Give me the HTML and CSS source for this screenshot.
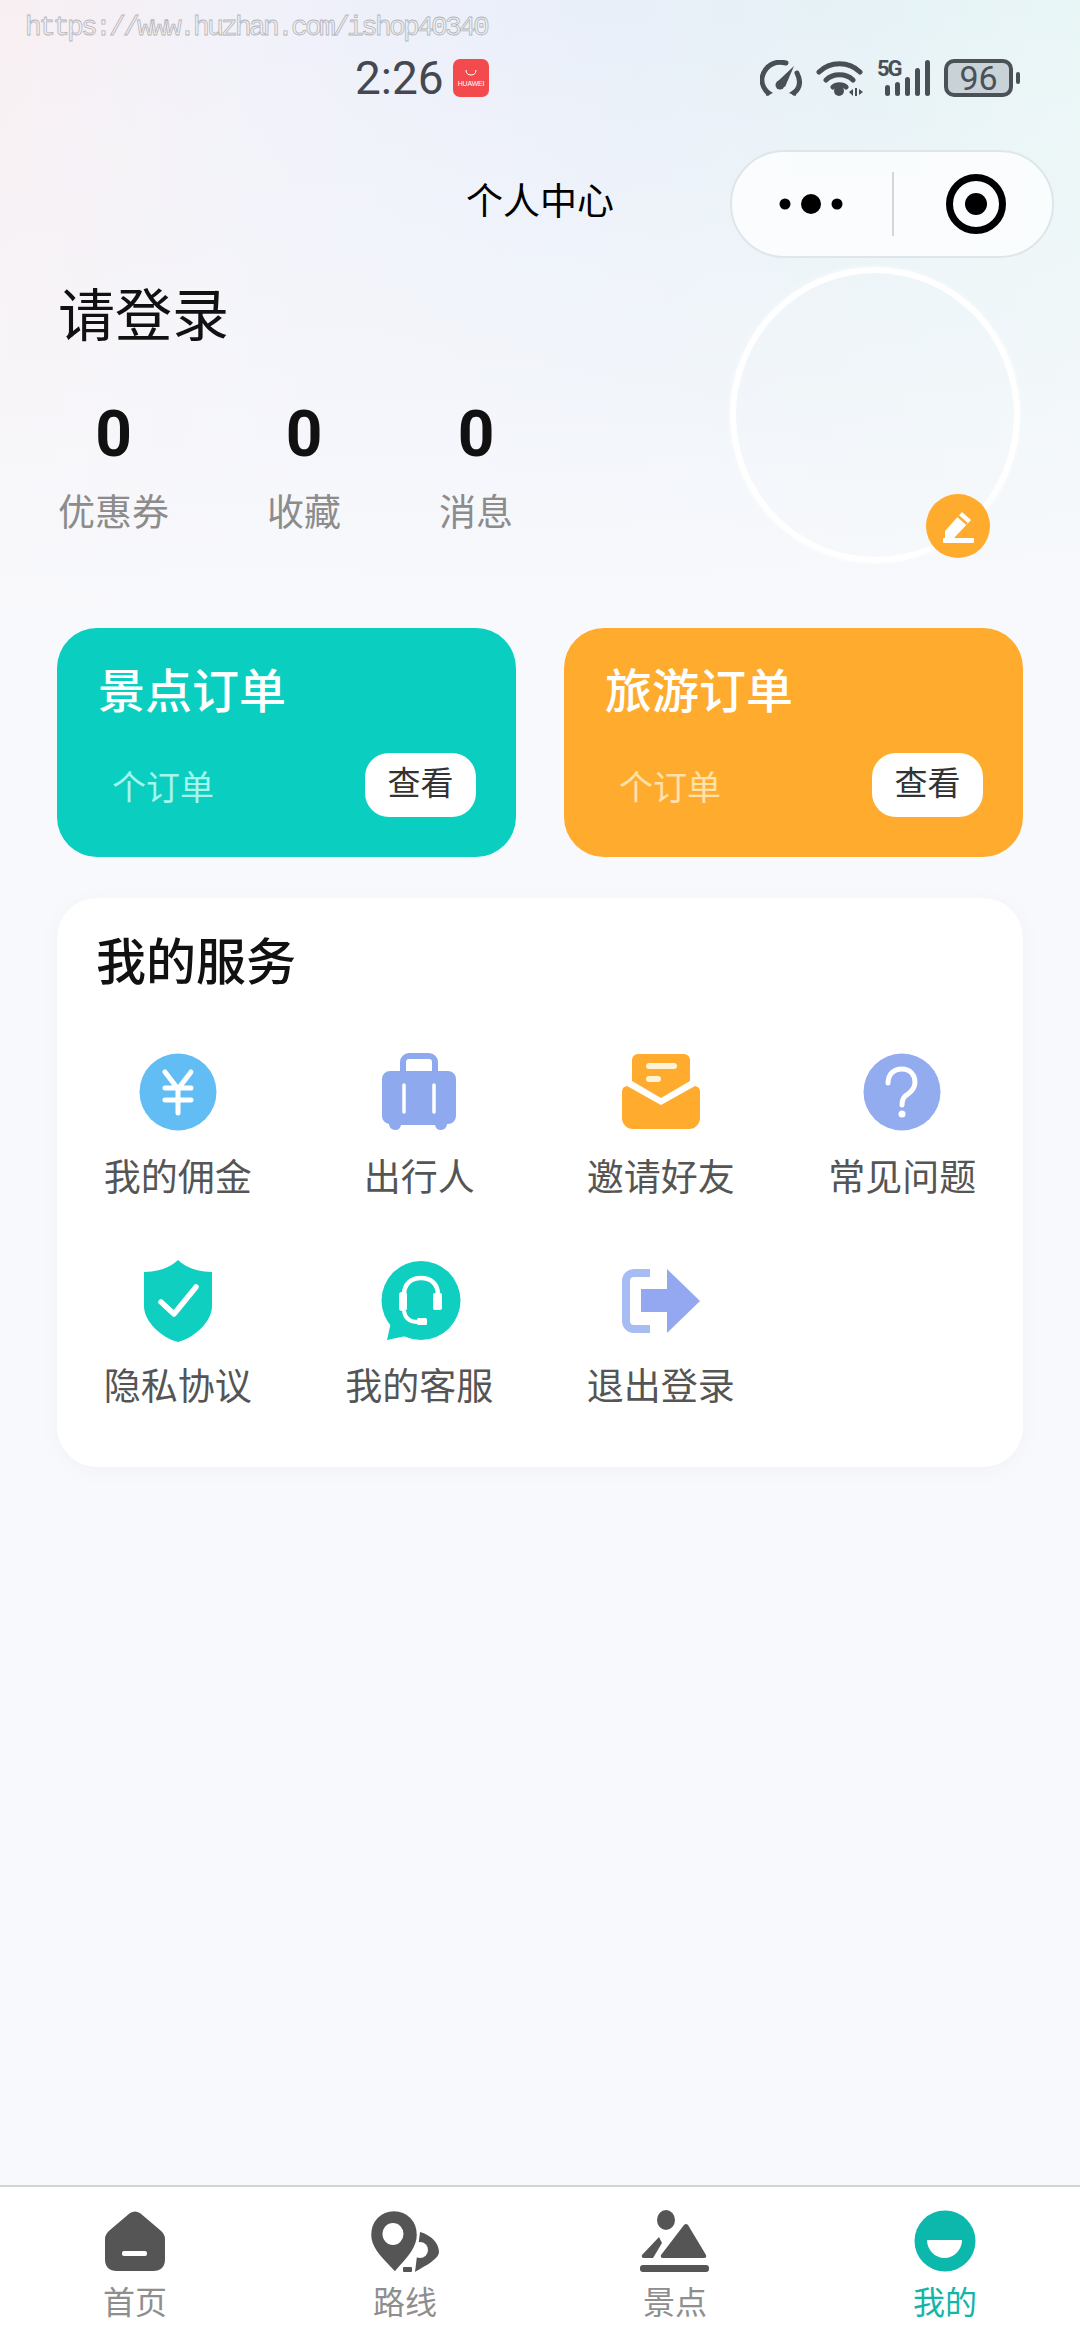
FILE: index.html
```html
<!DOCTYPE html>
<html lang="zh-CN">
<head>
<meta charset="utf-8">
<title>个人中心</title>
<link rel="stylesheet" href="styles.css">
</head>
<body>
<div class="page">
  <div class="watermark">https://www.huzhan.com/ishop40340</div>

  <div class="status">
    <div class="status-left">
      <span class="time">2:26</span>
      <span class="hw"><svg class="hw-smile" width="16" height="8" viewBox="0 0 16 8"><path d="M3 1c0 3.500 2 5 5 5s5-1.500 5-5" fill="none" stroke="#fff" stroke-width="1"/></svg><span class="hw-text">HUAWEI</span></span>
    </div>
    <div class="status-right">
      <svg width="42" height="36" viewBox="0 0 42 36"><path d="M8 33C1 26 0 17 6 9 11 3 18 1 26 3M37 13c4 8 3 15-3 20" fill="none" stroke="#4a4f56" stroke-width="5" stroke-linecap="round"/><path d="M17 22L34 6 25 27z" fill="#4a4f56"/><circle cx="20" cy="25" r="4.500" fill="#4a4f56"/><path d="M7 29l-1 7 7-3zM35 29l1 7-7-3z" fill="#4a4f56"/></svg>
      <svg width="47" height="38" viewBox="0 0 47 38"><path d="M3 13c11-11 30-11 41 0M10 21c7-7 20-7 27 0M17 28c3-3 10-3 13 0" fill="none" stroke="#4a4f56" stroke-width="5" stroke-linecap="round"/><circle cx="23" cy="32" r="5" fill="#4a4f56"/><path d="M33 33l4-3v7zM39 29h2v8h-2zM43 30l4 3-4 3z" fill="#4a4f56"/></svg>
      <svg class="signal" width="53" height="46" viewBox="0 -4 53 46"><text x="0" y="17" class="five-g">5G</text><rect x="8" y="26" width="5" height="11" rx="2.500" fill="#4a4f56"/><rect x="18" y="23" width="5" height="14" rx="2.500" fill="#4a4f56"/><rect x="28" y="18" width="5" height="19" rx="2.500" fill="#4a4f56"/><rect x="38" y="9" width="5" height="28" rx="2.500" fill="#4a4f56"/><rect x="48" y="1" width="5" height="36" rx="2.500" fill="#4a4f56"/></svg>
      <span class="battery"><span class="battery-body">96</span><span class="battery-tip"></span></span>
    </div>
  </div>

  <div class="nav">
    <span></span>
    <div class="nav-title">个人中心</div>
    <div class="capsule">
      <div class="capsule-part capsule-dots"><svg width="70" height="24" viewBox="0 0 70 24"><circle cx="8" cy="12" r="5.500" fill="#000"/><circle cx="34" cy="12" r="10" fill="#000"/><circle cx="60" cy="12" r="5.500" fill="#000"/></svg></div>
      <div class="capsule-line"></div>
      <div class="capsule-part capsule-target"><svg width="62" height="62" viewBox="0 0 62 62"><circle cx="31" cy="31" r="26.500" fill="none" stroke="#000" stroke-width="7"/><circle cx="31" cy="31" r="11" fill="#000"/></svg></div>
    </div>
  </div>

  <div class="profile">
    <div class="profile-left">
      <div class="login">请登录</div>
      <div class="stats">
        <div class="stat"><div class="stat-num">0</div><div class="stat-label">优惠券</div></div>
        <div class="stat"><div class="stat-num">0</div><div class="stat-label">收藏</div></div>
        <div class="stat"><div class="stat-num">0</div><div class="stat-label">消息</div></div>
      </div>
    </div>
    <div class="avatar">
      <div class="edit"><svg width="40" height="40" viewBox="0 0 40 40"><path d="M7 25L24 6l9 8-17 18H7z" fill="#fff"/><path d="M20 10l9 8" stroke="#ffab2e" stroke-width="2.500"/><rect x="5" y="32" width="31" height="5" rx="1" fill="#fff"/></svg></div>
    </div>
  </div>

  <div class="orders">
    <div class="order order-teal">
      <div class="order-title">景点订单</div>
      <div class="order-row"><span class="order-count">个订单</span><span class="order-btn">查看</span></div>
    </div>
    <div class="order order-orange">
      <div class="order-title">旅游订单</div>
      <div class="order-row"><span class="order-count">个订单</span><span class="order-btn">查看</span></div>
    </div>
  </div>

  <div class="service">
    <div class="service-title">我的服务</div>
    <div class="service-grid">
      <div class="service-item">
        <div class="service-icon"><svg width="78" height="78" viewBox="0 0 78 78"><circle cx="39" cy="39" r="38.500" fill="#63bdf5"/><path d="M26 19l13 17 13-17M39 36v24M26 35h26M26 47h26" fill="none" stroke="#fff" stroke-width="5" stroke-linecap="round" stroke-linejoin="round"/></svg></div>
        <div class="service-label">我的佣金</div>
      </div>
      <div class="service-item">
        <div class="service-icon"><svg width="76" height="78" viewBox="0 0 76 78"><path d="M22 20V9a6 6 0 0 1 6-6h20a6 6 0 0 1 6 6v11" fill="none" stroke="#8fa9ee" stroke-width="6"/><path d="M9 18h58a8 8 0 0 1 8 8v37a8 8 0 0 1-8 8h-1a6 6 0 0 1-6 6 6 6 0 0 1-6-5H20a6 6 0 0 1-6 5 6 6 0 0 1-6-6 8 8 0 0 1-7-8V26a8 8 0 0 1 8-8z" fill="#8fa9ee"/><path d="M23 32v27M53 32v27" stroke="#fff" stroke-width="3.500" stroke-linecap="round"/></svg></div>
        <div class="service-label">出行人</div>
      </div>
      <div class="service-item">
        <div class="service-icon"><svg width="78" height="76" viewBox="0 0 78 76"><path d="M16 0h46a6 6 0 0 1 6 6v21L39 44 10 27V6a6 6 0 0 1 6-6z" fill="#ffab2e"/><path d="M27 12h25" stroke="#fff3d6" stroke-width="6" stroke-linecap="round"/><path d="M27 25h9" stroke="#fff3d6" stroke-width="6" stroke-linecap="round"/><path d="M5 32l34 19 34-19a6 6 0 0 1 5 6v26a11 11 0 0 1-11 11H11A11 11 0 0 1 0 64V38a6 6 0 0 1 5-6z" fill="#ffab2e"/></svg></div>
        <div class="service-label">邀请好友</div>
      </div>
      <div class="service-item">
        <div class="service-icon"><svg width="78" height="78" viewBox="0 0 78 78"><circle cx="39" cy="39" r="38.500" fill="#93abef"/><path d="M25 30c0-9 6-14 14-14s13 6 13 13c0 6-3 9-7 12-4 2-6 5-6 11" fill="none" stroke="#fff" stroke-width="5" stroke-linecap="round"/><circle cx="39" cy="61" r="3.500" fill="#fff"/></svg></div>
        <div class="service-label">常见问题</div>
      </div>
      <div class="service-item">
        <div class="service-icon"><svg width="68" height="82" viewBox="0 0 68 82"><path d="M34 0c8 8 21 12 34 12v34c0 16-18 32-34 36C18 78 0 62 0 46V12c13 0 26-4 34-12z" fill="#0ecfc0"/><path d="M17 42l13 12 22-27" fill="none" stroke="#fff" stroke-width="5.500" stroke-linecap="round" stroke-linejoin="round"/></svg></div>
        <div class="service-label">隐私协议</div>
      </div>
      <div class="service-item">
        <div class="service-icon"><svg width="84" height="80" viewBox="-4 0 84 80"><circle cx="40" cy="39.500" r="39.500" fill="#0ecfc0"/><path d="M6 79l5-22 14 18z" fill="#0ecfc0"/><path d="M23 34c0-11 7-17 17-17s17 6 17 17" fill="none" stroke="#fff" stroke-width="4.500"/><rect x="18" y="31" width="8" height="19" rx="3" fill="#fff"/><rect x="52" y="32" width="9" height="17" rx="2" fill="#fff"/><path d="M23 50c1 7 6 11 14 11" fill="none" stroke="#fff" stroke-width="4"/><rect x="36" y="57" width="10" height="7" rx="1.500" fill="#fff"/></svg></div>
        <div class="service-label">我的客服</div>
      </div>
      <div class="service-item">
        <div class="service-icon"><svg width="78" height="64" viewBox="0 0 78 64"><path d="M28 4H12a8 8 0 0 0-8 8v40a8 8 0 0 0 8 8h16" fill="none" stroke="#a6bcf2" stroke-width="8"/><path d="M19 20h26V0l33 32-33 32V43H19z" fill="#93a8f0"/></svg></div>
        <div class="service-label">退出登录</div>
      </div>
    </div>
  </div>

  <div class="tabbar">
    <div class="tab">
      <svg width="60" height="62" viewBox="0 0 60 62"><path d="M25 3q5-3 10 0l20 17q5 4 5 9v20q0 12-12 12H12Q0 61 0 49V29q0-5 5-9z" fill="#555"/><rect x="17" y="41" width="25" height="5" rx="2" fill="#fff"/></svg>
      <div class="tab-label">首页</div>
    </div>
    <div class="tab">
      <svg width="70" height="62" viewBox="0 0 70 62"><path d="M50 22c11 3 19 11 19 20 0 7-14 14-24 20z" fill="#555"/><circle cx="50" cy="40" r="8" fill="#fff"/><path d="M24 0c14 0 24 11 24 25 0 15-14 27-22 37h-2C15 52 0 40 0 25 0 11 10 0 24 0z" fill="#555" stroke="#fff" stroke-width="2.500"/><ellipse cx="23" cy="24" rx="10.500" ry="11" fill="#fff"/><rect x="33" y="57" width="9" height="5" rx="1" fill="#555"/></svg>
      <div class="tab-label">路线</div>
    </div>
    <div class="tab">
      <svg width="70" height="62" viewBox="0 0 70 62"><ellipse cx="26" cy="10" rx="9" ry="10" fill="#555"/><path d="M44 15q2-2 4 0l18 30q1 3-2 3H23q-3 0-2-3z" fill="#555"/><path d="M19 27l3 6-9 15H4q-3 0-2-3z" fill="#555"/><rect x="0" y="55" width="69" height="7" rx="3" fill="#555"/></svg>
      <div class="tab-label">景点</div>
    </div>
    <div class="tab tab-active">
      <svg width="62" height="62" viewBox="0 0 62 62"><circle cx="31" cy="31" r="30.500" fill="#0bb8ab"/><path d="M13 30h35c0 10-8 18-17.500 18S13 40 13 30z" fill="#fff"/></svg>
      <div class="tab-label">我的</div>
    </div>
  </div>
</div>
</body>
</html>
```

FILE: styles.css
```css
* {
  box-sizing: border-box;
}

html,
body {
  margin: 0;
  padding: 0;
}

body {
  width: 1080px;
  height: 2340px;
  overflow: hidden;
  font-family: "Noto Sans CJK SC", "Noto Sans", sans-serif;
}

.page {
  position: relative;
  width: 1080px;
  height: 2340px;
  display: flex;
  flex-direction: column;
  background-color: #f8f9fc;
  background-image:
    linear-gradient(180deg, rgba(248, 249, 252, 0) 0, rgba(248, 249, 252, 0.4) 260px, #f8f9fc 620px),
    linear-gradient(90deg, #f8eff2 0, #f1f1f9 22%, #e9eff9 55%, #e6f2f6 80%, #e9f6f6 100%);
  background-size: 100% 640px, 100% 640px;
  background-repeat: no-repeat;
}

.watermark {
  position: absolute;
  left: 25px;
  top: 10px;
  font-family: "Liberation Mono", monospace;
  font-size: 28px;
  line-height: 36px;
  letter-spacing: -2.800px;
  color: transparent;
  -webkit-text-stroke: 0.8px #b5b5b8;
  white-space: nowrap;
}

/* status bar */
.status {
  height: 150px;
  padding: 59px 60px 0 355px;
  display: flex;
  justify-content: space-between;
  align-items: flex-start;
}

.status-left {
  display: flex;
  align-items: center;
  gap: 11px;
  height: 38px;
}

.time {
  font-family: Roboto, sans-serif;
  font-size: 46px;
  line-height: 38px;
  color: #454850;
  width: 87px;
}

.hw {
  width: 36px;
  height: 38px;
  border-radius: 7px;
  background: #f34a4d;
  display: flex;
  flex-direction: column;
  align-items: center;
  justify-content: center;
  gap: 3px;
}

.hw-smile {
  display: block;
}

.hw-text {
  font-family: "Liberation Sans", sans-serif;
  font-size: 7px;
  line-height: 8px;
  color: #fff;
  letter-spacing: -0.200px;
}

.status-right {
  display: flex;
  align-items: center;
  gap: 14px;
  height: 38px;
}

.five-g {
  font-family: "Roboto", sans-serif;
  font-weight: 700;
  font-size: 22px;
  fill: #4a4f56;
  letter-spacing: -2px;
}

.battery {
  display: flex;
  align-items: center;
  gap: 3px;
}

.battery-body {
  width: 69px;
  height: 38px;
  border: 4px solid #4a5157;
  border-radius: 10px;
  background: #c9d3d7;
  display: flex;
  align-items: center;
  justify-content: center;
  font-family: Roboto, sans-serif;
  font-size: 34px;
  line-height: 30px;
  color: #4a5157;
}

.battery-tip {
  width: 4px;
  height: 12px;
  border-radius: 2px;
  background: #4a5157;
}

/* navigation */
.nav {
  height: 108px;
  padding: 0 26px;
  display: grid;
  grid-template-columns: 1fr auto 1fr;
  align-items: center;
}

.nav-title {
  font-size: 37px;
  line-height: 50px;
  color: #000;
  padding-bottom: 10px;
  height: 60px;
}

.capsule {
  justify-self: end;
  width: 324px;
  height: 108px;
  border: 2px solid #dfe6ea;
  border-radius: 54px;
  background: rgba(255, 255, 255, 0.72);
  display: flex;
  align-items: center;
}

.capsule-part {
  display: flex;
  align-items: center;
  justify-content: center;
}

.capsule-dots {
  flex: 0 0 160px;
}

.capsule-target {
  flex: 1;
  padding-left: 6px;
}

.capsule-part svg {
  display: block;
}

.capsule-line {
  width: 2px;
  height: 64px;
  background: #d2d7dc;
}

/* profile */
.profile {
  margin-top: 9px;
  height: 296px;
  padding-right: 60px;
  display: flex;
  justify-content: space-between;
}

.profile-left {
  padding: 16px 0 0 58px;
}

.login {
  font-size: 57px;
  line-height: 56px;
  color: #111;
}

.stats {
  margin-top: 66px;
  display: flex;
  gap: 98px;
}

.stat {
  text-align: center;
}

.stat-num {
  font-family: Roboto, sans-serif;
  font-weight: 700;
  font-size: 64px;
  line-height: 60px;
  color: #111;
}

.stat-label {
  margin-top: 25px;
  font-size: 37px;
  line-height: 40px;
  color: #8c8c8c;
}

.avatar {
  position: relative;
  width: 290px;
  height: 296px;
  border: 6px solid #fff;
  border-radius: 50%;
  box-shadow: 0 0 5px rgba(255, 255, 255, 0.8);
}

.edit {
  position: absolute;
  right: 24px;
  bottom: -1px;
  width: 64px;
  height: 64px;
  border-radius: 50%;
  background: #ffab2e;
  display: flex;
  align-items: center;
  justify-content: center;
}

/* orders */
.orders {
  margin-top: 65px;
  padding: 0 57px;
  display: flex;
  gap: 48px;
}

.order {
  width: 459px;
  height: 229px;
  border-radius: 40px;
  padding: 35px 40px 0 41px;
  color: #fff;
}

.order-teal {
  background: #0acfc0;
}

.order-orange {
  background: #ffab2e;
}

.order-title {
  font-size: 47px;
  font-weight: 500;
  line-height: 50px;
}

.order-row {
  margin-top: 40px;
  display: flex;
  align-items: center;
  justify-content: space-between;
}

.order-count {
  margin: 2px 0 0 14px;
  font-size: 34px;
  line-height: 40px;
}

.order-teal .order-count {
  color: #a5f5ec;
}

.order-orange .order-count {
  color: #ffe2ab;
}

.order-btn {
  width: 111px;
  height: 64px;
  border-radius: 24px;
  background: #fff;
  color: #333;
  font-size: 33px;
  line-height: 56px;
  text-align: center;
}

/* service */
.service {
  margin: 41px 57px 0;
  height: 569px;
  border-radius: 40px;
  background: #fff;
  box-shadow: 0 4px 24px rgba(30, 40, 90, 0.03);
  padding-top: 30px;
}

.service-title {
  padding-left: 39px;
  font-size: 50px;
  font-weight: 500;
  line-height: 60px;
  color: #111;
}

.service-grid {
  margin-top: 64px;
  display: grid;
  grid-template-columns: repeat(4, 1fr);
  row-gap: 64px;
}

.service-item {
  display: flex;
  flex-direction: column;
  align-items: center;
  gap: 21px;
}

.service-icon {
  height: 80px;
  display: flex;
  align-items: center;
  justify-content: center;
}

.service-icon svg {
  display: block;
}

.service-label {
  font-size: 37px;
  line-height: 44px;
  color: #555;
  white-space: nowrap;
}

/* tab bar */
.tabbar {
  margin-top: auto;
  height: 155px;
  border-top: 2px solid #d3d3d6;
  background: #fff;
  padding-top: 23px;
  display: grid;
  grid-template-columns: repeat(4, 270px);
}

.tab {
  display: flex;
  flex-direction: column;
  align-items: center;
  gap: 8px;
}

.tab svg {
  display: block;
}

.tab-label {
  font-size: 32px;
  line-height: 40px;
  color: #8e8e8e;
}

.tab-active .tab-label {
  color: #12b5a8;
}
```
